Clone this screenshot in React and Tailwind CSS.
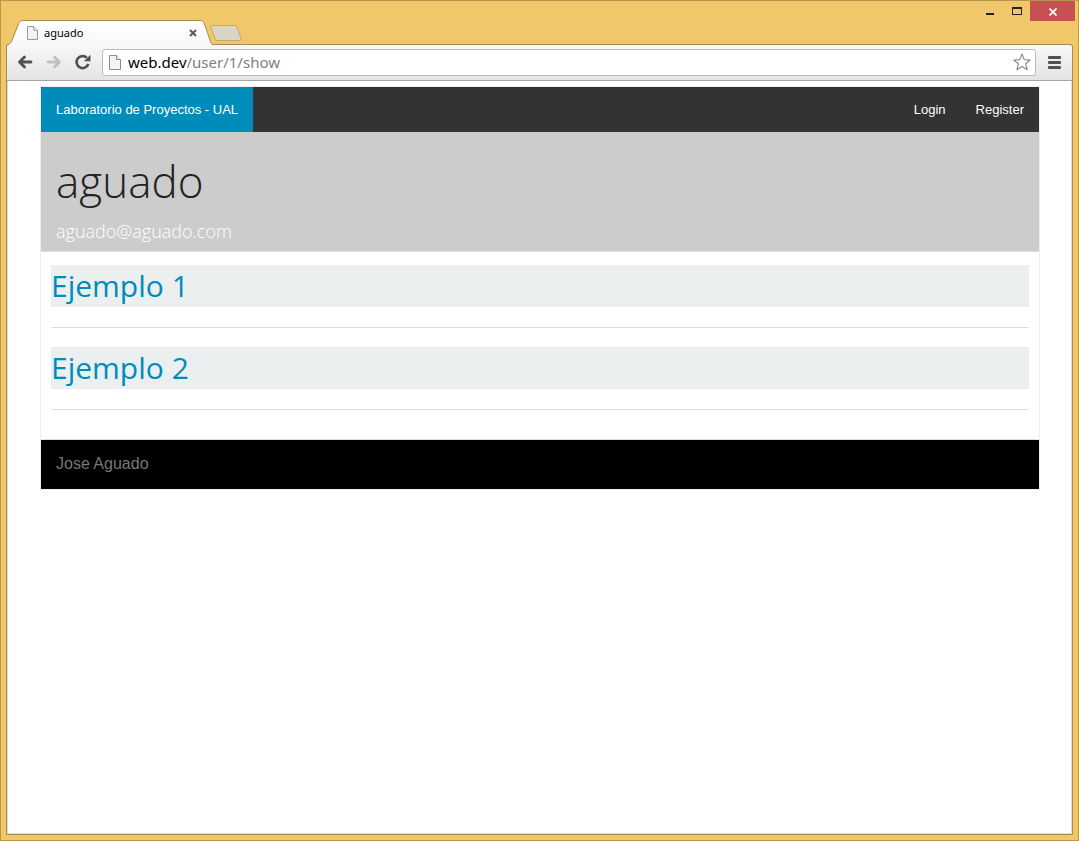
function PageIcon({ className }) {
  return (
    <svg viewBox="0 0 12 15" className={className} fill="none" aria-hidden="true">
      <path d="M.5.5h7l4 4v10H.5z" fill="#f4f4f4" stroke="#8b8b8b" />
      <path d="M7.5.5v4h4" fill="#fff" stroke="#8b8b8b" />
    </svg>
  );
}

function Arrow({ className }) {
  return (
    <svg viewBox="0 0 16 14" className={className} fill="none" aria-hidden="true">
      <path
        d="M14 7H3M7.500 2L2.500 7L7.500 12"
        stroke="currentColor"
        strokeWidth="2.800"
        strokeLinecap="round"
        strokeLinejoin="round"
      />
    </svg>
  );
}

function TitleBar() {
  return (
    <div className="flex h-[43px] items-start justify-between">
      <div className="flex pt-[19px]">
        <div className="relative flex h-6 w-[204px] items-center pl-[21px] pr-[13px]">
          <svg
            viewBox="0 0 207 26"
            className="absolute left-0 top-0 h-[26px] w-[207px]"
            fill="none"
            aria-hidden="true"
          >
            <defs>
              <linearGradient id="tab" x1="0" y1="0" x2="0" y2="1">
                <stop offset="0" stopColor="#ffffff" />
                <stop offset="1" stopColor="#f8f8f8" />
              </linearGradient>
            </defs>
            <path
              d="M1 26V25C4 24 5 22.500 6 20L12.500 4C13.500 1.500 14.500.5 17 .5H194C196.500.5 197.500 1.500 198.500 4L204 20C205 23 205.500 24.500 207 25V26Z"
              fill="url(#tab)"
            />
            <path
              d="M0 25.500C3 25 5 23 6 20L12.500 4C13.500 1.500 14.500.5 17 .5H194C196.500.5 197.500 1.500 198.500 4L204 20C205 23 205.500 24.500 207 24.500"
              stroke="#a88c49"
            />
          </svg>
          <PageIcon className="relative mt-px h-[14px] w-[11px]" />
          <span className="relative ml-[6px] mt-[2px] grow font-['Noto_Sans',sans-serif] text-[11px] leading-4 text-black">
            aguado
          </span>
          <button type="button" aria-label="Close tab" className="relative mt-px text-[#5a5a5a]">
            <svg viewBox="0 0 8 8" className="h-2 w-2" aria-hidden="true">
              <path d="M1 1l6 6M7 1L1 7" stroke="currentColor" strokeWidth="2" />
            </svg>
          </button>
        </div>
        <button type="button" aria-label="New tab" className="mt-[5px] self-start">
          <svg viewBox="0 0 32 17" className="h-[17px] w-8" aria-hidden="true">
            <path
              d="M2.500.5H24.500Q26.500.5 27.300 2.500L31 13.500Q31.500 15.500 29.500 15.500H8Q6 15.500 5 13.500L.8 2.500Q.2.5 2.500.5Z"
              fill="#d9d5c6"
              stroke="#c4a862"
            />
          </svg>
        </button>
      </div>
      <div className="-mr-[2px] flex h-5">
        <button type="button" aria-label="Minimize" className="flex w-[27px] justify-center pt-3">
          <span className="h-[2px] w-2 bg-[#222]" />
        </button>
        <button type="button" aria-label="Maximize" className="flex w-[27px] justify-center pt-[6px]">
          <span className="h-2 w-[10px] border border-t-2 border-[#222]" />
        </button>
        <button
          type="button"
          aria-label="Close"
          className="flex w-[45px] items-center justify-center bg-[#c75050]"
        >
          <svg viewBox="0 0 8 8" className="mt-px h-2 w-2" aria-hidden="true">
            <path d="M.5.5l7 7M7.500.5l-7 7" stroke="#fff" strokeWidth="1.700" />
          </svg>
        </button>
      </div>
    </div>
  );
}

function Toolbar() {
  return (
    <div className="flex h-[37px] items-center rounded-tr-[3px] border-y border-t-[#a88c49] border-b-[#a5a5a5] bg-linear-to-b from-[#f8f8f8] to-[#e4e4e4] pb-px pl-[10px] pr-[11px]">
      <button type="button" aria-label="Back" className="text-[#505050]">
        <Arrow className="h-[14px] w-4" />
      </button>
      <button type="button" aria-label="Forward" className="ml-[13px] text-[#c0c0c0]">
        <Arrow className="h-[14px] w-4 -scale-x-100" />
      </button>
      <button type="button" aria-label="Reload" className="ml-[13px] text-[#505050]">
        <svg viewBox="0 0 16 16" className="h-4 w-4" fill="none" aria-hidden="true">
          <path d="M13.300 10A6 6 0 1 1 11.800 3.800" stroke="currentColor" strokeWidth="2.600" />
          <path d="M15.500.8V7.300H9z" fill="currentColor" />
        </svg>
      </button>
      <div className="ml-[11px] flex h-[27px] grow items-center rounded-[3px] border border-[#bcbcbc] bg-white pl-[6px] pr-1 font-['Noto_Sans',sans-serif] text-[15px] leading-5">
        <PageIcon className="h-[15px] w-3 shrink-0" />
        <label htmlFor="address" className="ml-[7px] text-black">
          web.dev
        </label>
        <input
          id="address"
          type="text"
          defaultValue="/user/1/show"
          className="h-5 min-w-0 grow bg-transparent p-0 text-[#808080] outline-none"
        />
        <button type="button" aria-label="Bookmark this page">
          <svg viewBox="0 0 18 18" className="h-[18px] w-[18px]" fill="none" aria-hidden="true">
            <path
              d="M9 1L11.200 6.600L17.200 7L12.600 10.800L14.100 16.700L9 13.400L3.900 16.700L5.400 10.800L.8 7L6.800 6.600Z"
              stroke="#8c8c8c"
              strokeWidth="1.200"
              strokeLinejoin="round"
            />
          </svg>
        </button>
      </div>
      <button type="button" aria-label="Menu" className="ml-3 flex flex-col gap-[2px]">
        <span className="h-[3px] w-[13px] rounded-[1px] bg-[#505050]" />
        <span className="h-[3px] w-[13px] rounded-[1px] bg-[#505050]" />
        <span className="h-[3px] w-[13px] rounded-[1px] bg-[#505050]" />
      </button>
    </div>
  );
}

function Post({ title }) {
  return (
    <article className="mb-[19px] border-b border-[#ddd] pb-5">
      <h2 className="bg-[#ebeff0] font-['Open_Sans',sans-serif] text-[30px] font-normal leading-[42px] text-[#008cba]">
        <a href="#post">{title}</a>
      </h2>
    </article>
  );
}

function Site() {
  return (
    <div className="ml-8 mr-[31px] mt-[5px] border border-[#eee] font-['Liberation_Sans',Arial,sans-serif]">
      <nav className="flex h-[45px] justify-between bg-[#333] text-[13px] leading-[45px] text-white">
        <a href="#home" className="rounded-tl-[2px] bg-[#008cba] px-[15px]">
          Laboratorio de Proyectos - UAL
        </a>
        <div className="flex">
          <a href="#login" className="px-[15px]">
            Login
          </a>
          <a href="#register" className="px-[15px]">
            Register
          </a>
        </div>
      </nav>
      <header className="border-b border-[#ddd] bg-[#ccc] px-[15px] pb-[6px] pt-[18px] font-['Open_Sans',sans-serif] font-light">
        <h1 className="text-[44px] leading-[62px] text-[#222]">aguado</h1>
        <p className="mt-[5px] text-[18px] leading-7 text-white">aguado@aguado.com</p>
      </header>
      <main className="border-b border-[#ddd] px-[10px] pb-[10px] pt-[13px]">
        <Post title="Ejemplo 1" />
        <Post title="Ejemplo 2" />
      </main>
      <footer className="h-[49px] bg-black px-[15px] pt-3 text-[16px] leading-6 text-[#777]">
        Jose Aguado
      </footer>
    </div>
  );
}

export default function App() {
  return (
    <div className="flex min-h-screen flex-col border border-[#b8964c] bg-[#f0c869] px-[5px] pb-[5px]">
      <TitleBar />
      <div className="flex grow flex-col rounded-t-[3px] border border-t-0 border-[#a88c49]">
        <Toolbar />
        <div className="grow border border-t-0 border-[#ddd] bg-white">
          <Site />
        </div>
      </div>
    </div>
  );
}
